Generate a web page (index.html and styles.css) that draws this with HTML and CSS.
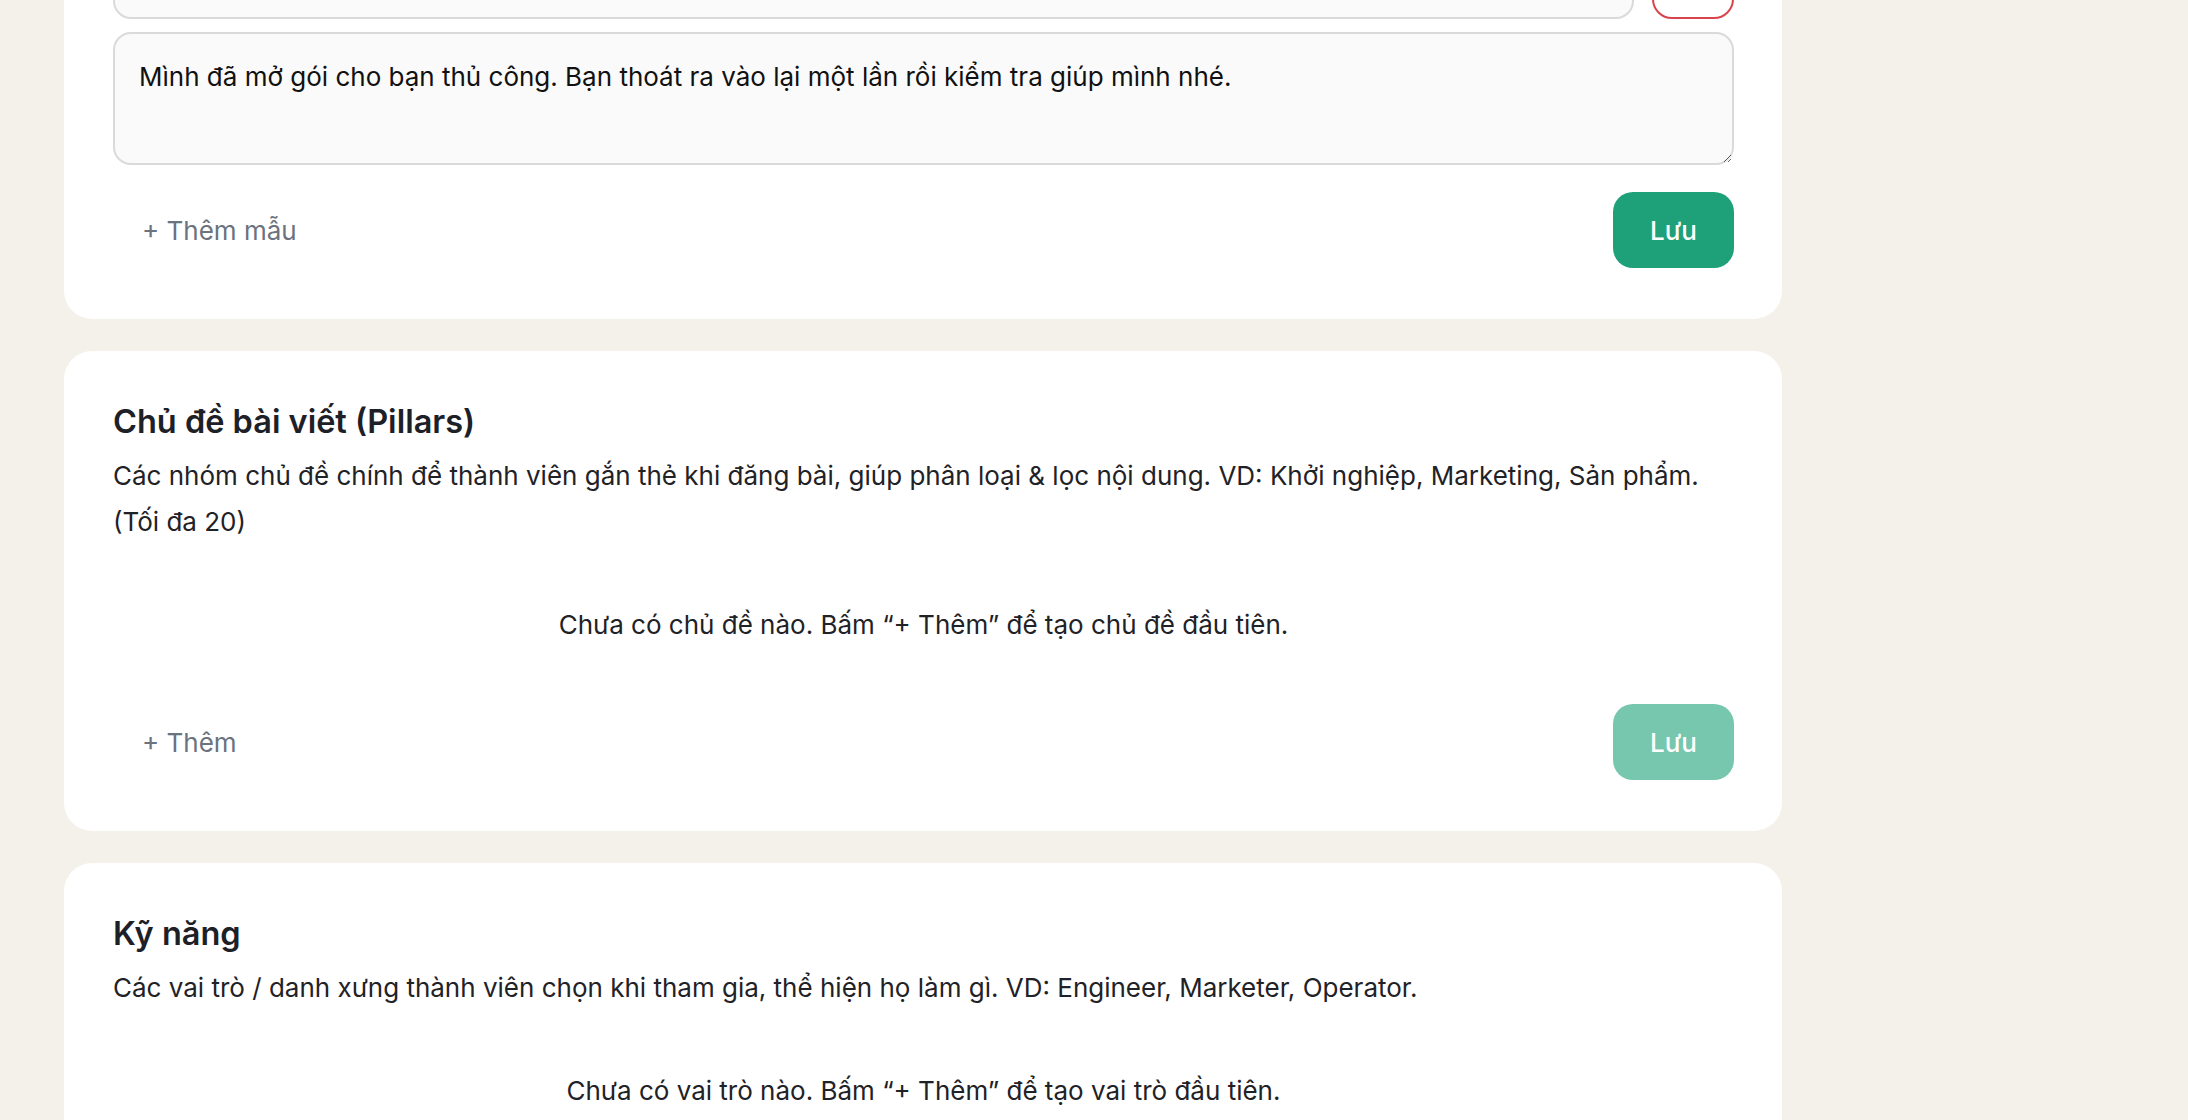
FILE: index.html
```html
<!DOCTYPE html>
<html lang="vi">
<head>
  <meta charset="UTF-8">
  <meta name="viewport" content="width=device-width, initial-scale=1.0">
  <title>Cài đặt cộng đồng</title>
  <link rel="stylesheet" href="styles.css">
</head>
<body>
  <div class="page">
    <div class="stack">

      <section class="card">
        <h2 class="card-title">Tin nhắn mẫu</h2>
        <p class="card-desc">Các câu trả lời soạn sẵn để gửi nhanh cho thành viên.</p>

        <div class="template-list">
          <div class="template">
            <div class="template-head">
              <input class="field" type="text" value="Mở gói thủ công">
              <button class="btn-delete" type="button">&times;</button>
            </div>
            <textarea class="field template-body" id="lastTemplate" rows="2">Mình đã mở gói cho bạn thủ công. Bạn thoát ra vào lại một lần rồi kiểm tra giúp mình nhé.</textarea>
          </div>
        </div>

        <div class="card-actions">
          <button class="btn-link" type="button">+ Thêm mẫu</button>
          <button class="btn-save" type="button">Lưu</button>
        </div>
      </section>

      <section class="card">
        <h2 class="card-title">Chủ đề bài viết (Pillars)</h2>
        <p class="card-desc">Các nhóm chủ đề chính để thành viên gắn thẻ khi đăng bài, giúp phân loại &amp; lọc nội dung. VD: Khởi nghiệp, Marketing, Sản phẩm. (Tối đa 20)</p>

        <div class="empty">Chưa có chủ đề nào. Bấm “+ Thêm” để tạo chủ đề đầu tiên.</div>

        <div class="card-actions">
          <button class="btn-link" type="button">+ Thêm</button>
          <button class="btn-save" type="button" disabled>Lưu</button>
        </div>
      </section>

      <section class="card">
        <h2 class="card-title">Kỹ năng</h2>
        <p class="card-desc">Các vai trò / danh xưng thành viên chọn khi tham gia, thể hiện họ làm gì. VD: Engineer, Marketer, Operator.</p>

        <div class="empty">Chưa có vai trò nào. Bấm “+ Thêm” để tạo vai trò đầu tiên.</div>

        <div class="card-actions">
          <button class="btn-link" type="button">+ Thêm</button>
          <button class="btn-save" type="button" disabled>Lưu</button>
        </div>
      </section>

    </div>
  </div>

  <script>
    var last = document.getElementById('lastTemplate');
    window.scrollTo(0, last.getBoundingClientRect().top + window.scrollY - 32);
  </script>
</body>
</html>
```

FILE: styles.css
```css
body {
  margin: 0;
  font-family: Inter, "Noto Sans", sans-serif;
  color: #1d2127;
  background-color: #f3f1ea;
  background-image: radial-gradient(circle at 0 0, rgba(250, 214, 160, 0.55), rgba(243, 241, 234, 0) 70px);
  background-repeat: no-repeat;
}

.page {
  padding: 48px 64px 64px;
}

.stack {
  max-width: 1718px;
  display: flex;
  flex-direction: column;
  gap: 32px;
}

.card {
  background-color: #fff;
  border-radius: 28px;
  padding: 48px 48px 51px 49px;
}

.card-title {
  margin: 0 0 8px;
  font-size: 32.5px;
  line-height: 46px;
  font-weight: 600;
  color: #1d2127;
}

.card-desc {
  margin: 0;
  font-size: 26px;
  line-height: 46px;
  color: #1f2226;
}

.template-list {
  margin-top: 32px;
  display: flex;
  flex-direction: column;
  gap: 24px;
}

.template {
  display: flex;
  flex-direction: column;
  gap: 13px;
}

.template-head {
  display: flex;
  gap: 18px;
}

.field {
  box-sizing: border-box;
  width: 100%;
  font-family: inherit;
  font-size: 26px;
  line-height: 46px;
  color: #111;
  background-color: #fafafa;
  border: 2px solid #dadada;
  border-radius: 18px;
  padding: 13px 24px;
}

.template-body {
  height: 133px;
  padding: 20px 24px;
  resize: vertical;
}

.btn-delete {
  flex: 0 0 82px;
  height: 76px;
  background-color: #fff;
  border: 2px solid #d8434c;
  border-radius: 20px;
  color: #d8434c;
  font-size: 30px;
  cursor: pointer;
}

.card-actions {
  margin-top: 27px;
  display: flex;
  justify-content: space-between;
  align-items: center;
}

.empty + .card-actions {
  margin-top: 0;
}

.btn-link {
  background: none;
  border: none;
  padding: 0 29px;
  height: 76px;
  font-family: inherit;
  font-size: 26px;
  color: #6b7280;
  cursor: pointer;
}

.btn-save {
  width: 121px;
  height: 76px;
  background-color: #1ea179;
  color: #fff;
  border: none;
  border-radius: 20px;
  font-family: inherit;
  font-size: 26px;
  font-weight: 500;
  cursor: pointer;
}

.btn-save:disabled {
  opacity: 0.6;
  cursor: default;
}

.empty {
  padding: 57px 0 56px;
  text-align: center;
  font-size: 26px;
  line-height: 46px;
  color: #1f2226;
}
```
